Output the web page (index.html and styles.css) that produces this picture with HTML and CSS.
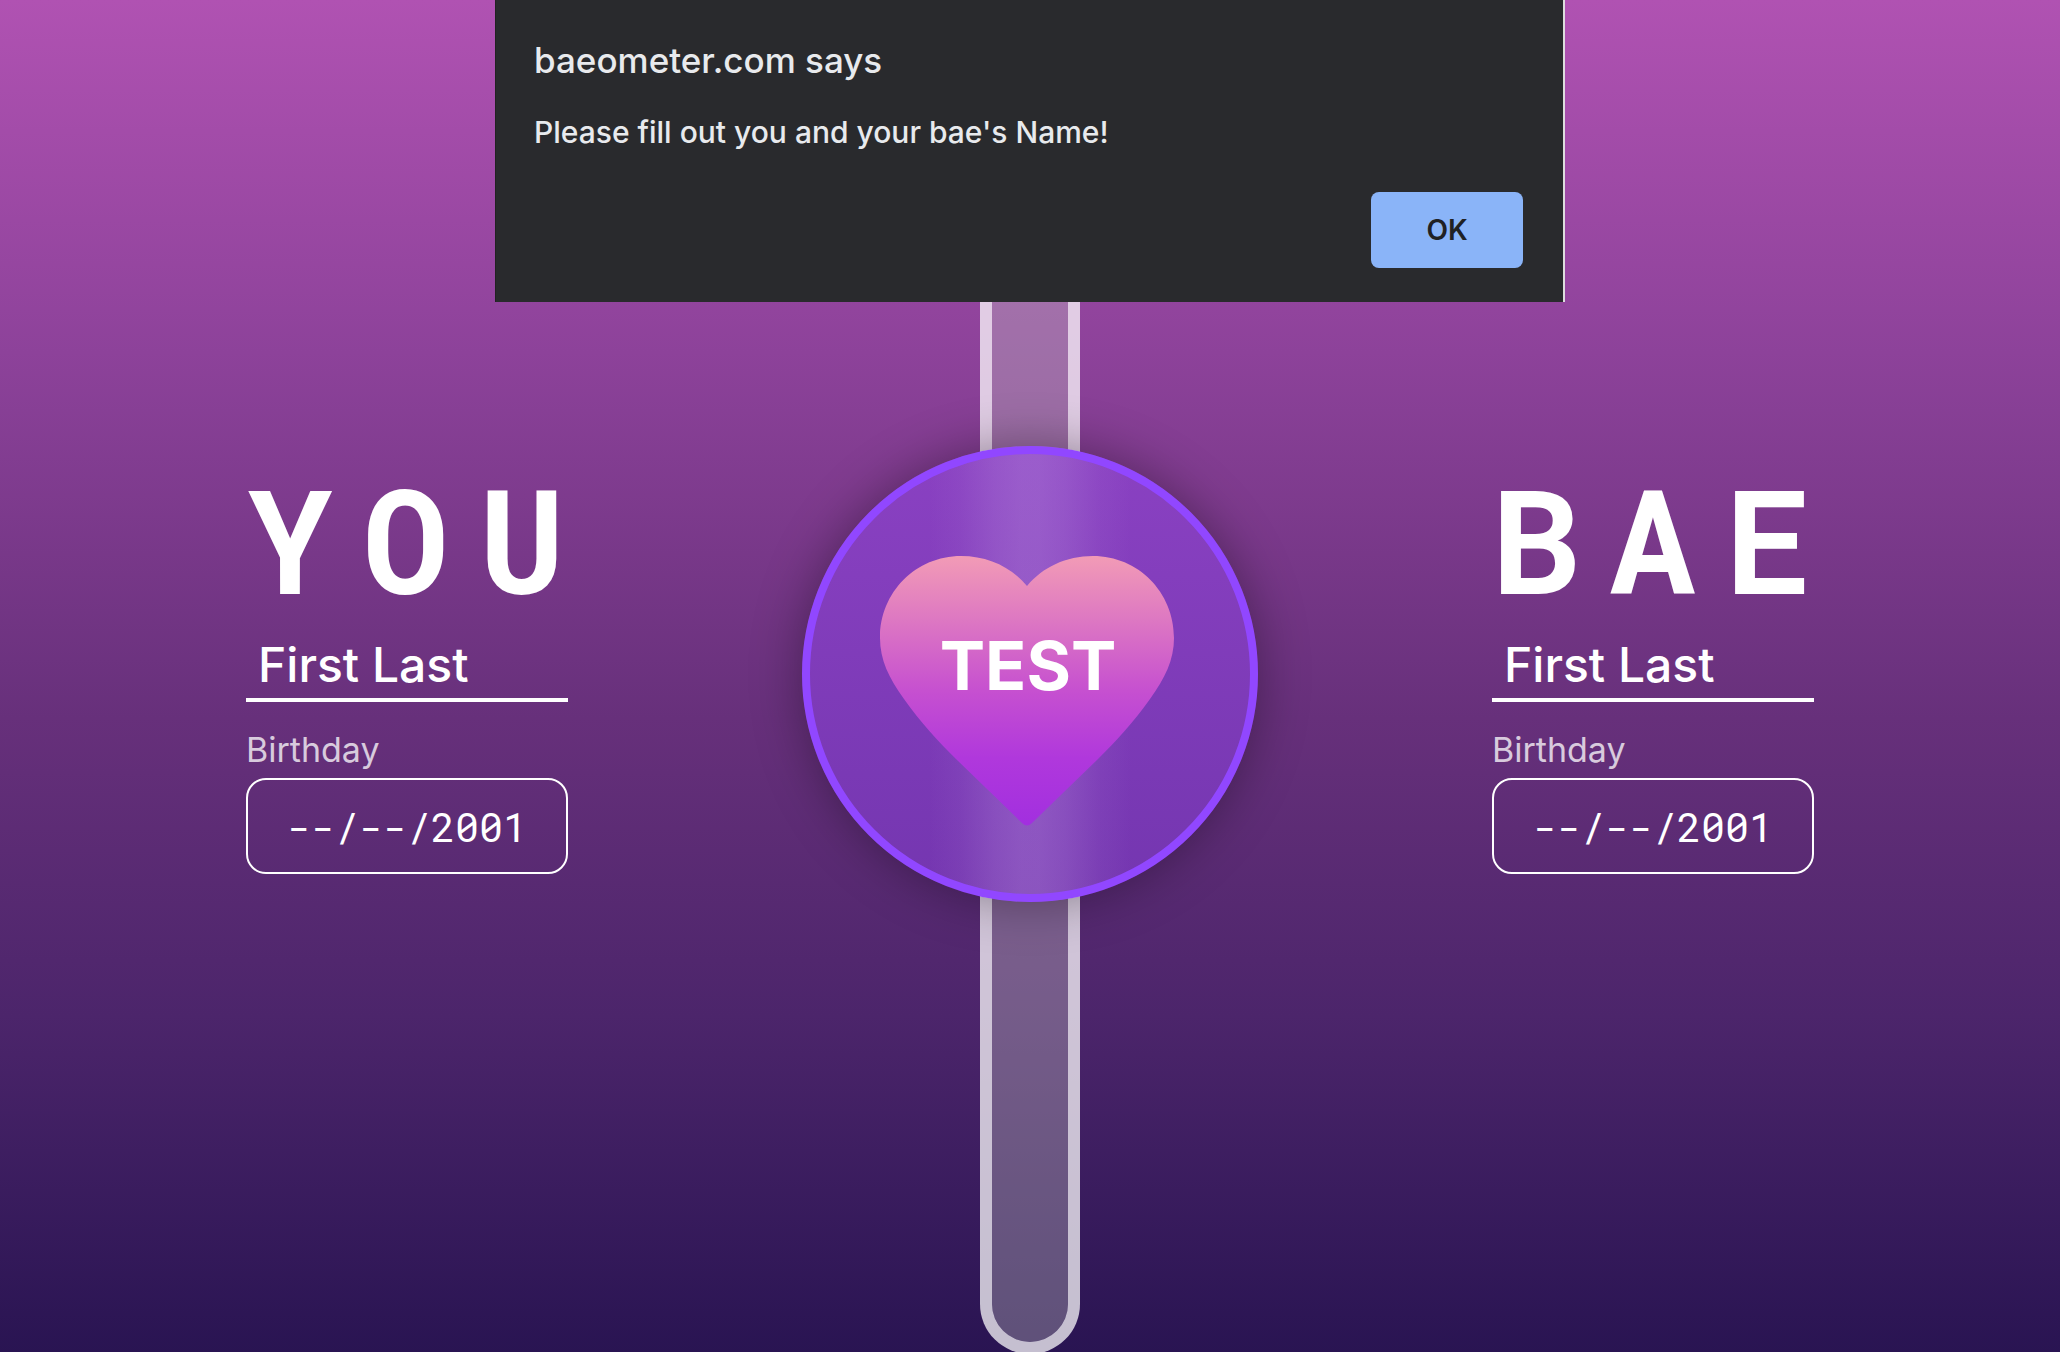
FILE: index.html
```html
<!DOCTYPE html>
<html lang="en">
<head>
<meta charset="utf-8">
<meta name="viewport" content="width=device-width, initial-scale=1">
<title>Baeometer</title>
<link rel="stylesheet" href="styles.css">
</head>
<body>
<main class="meter">
  <section class="person">
    <h1 class="person-title">YOU</h1>
    <input class="name-input" type="text" placeholder="First Last" aria-label="Your name">
    <label class="birthday-label" for="you-birthday">Birthday</label>
    <input class="birthday-input" id="you-birthday" type="text" value="--/--/2001">
  </section>

  <div class="gauge">
    <div class="track"></div>
    <button class="test-button" type="button">
      <svg class="heart" viewBox="0 0 300 270" aria-hidden="true">
        <defs>
          <linearGradient id="heart-fill" x1="0" y1="0" x2="0" y2="1">
            <stop offset="0" stop-color="#f29bb6"/>
            <stop offset="0.5" stop-color="#c650d0"/>
            <stop offset="0.75" stop-color="#b038dc"/>
            <stop offset="1" stop-color="#a22fdf"/>
          </linearGradient>
        </defs>
        <path fill="url(#heart-fill)" d="M147 30C131 11 108 0 81 0C36 0 0 36 0 82C0 104 9 122 24 143C41 167 58 185 76 203L142 267Q147 272 152 267L218 203C236 185 253 167 270 143C285 122 294 104 294 82C294 36 258 0 213 0C186 0 163 11 147 30Z"/>
      </svg>
      <span class="test-label">TEST</span>
    </button>
  </div>

  <section class="person">
    <h1 class="person-title">BAE</h1>
    <input class="name-input" type="text" placeholder="First Last" aria-label="Bae's name">
    <label class="birthday-label" for="bae-birthday">Birthday</label>
    <input class="birthday-input" id="bae-birthday" type="text" value="--/--/2001">
  </section>
</main>

<div class="dialog" role="alertdialog" aria-labelledby="dialog-title" aria-describedby="dialog-message">
  <h2 class="dialog-title" id="dialog-title">baeometer.com says</h2>
  <p class="dialog-message" id="dialog-message">Please fill out you and your bae's Name!</p>
  <button class="dialog-ok" type="button">OK</button>
</div>
</body>
</html>
```
FILE: styles.css
```css
* {
  box-sizing: border-box;
}

body {
  margin: 0;
  min-height: 100vh;
  overflow: hidden;
  font-family: Inter, "Liberation Sans", sans-serif;
  color: #fff;
  background: linear-gradient(#b052b2 0%, #8d429a 26%, #67307b 53%, #4c256b 75%, #291452 100%);
}

.meter {
  display: grid;
  grid-template-columns: 322px 456px 322px;
  justify-content: center;
  column-gap: 234px;
  min-height: 100vh;
}

.person {
  display: flex;
  flex-direction: column;
  padding-top: 454px;
}

.person-title {
  margin: 0;
  font-family: "Roboto Mono", "DejaVu Sans Mono", monospace;
  font-size: 144px;
  font-weight: 700;
  line-height: 168px;
  letter-spacing: 30px;
}

.name-input {
  width: 100%;
  height: 80px;
  padding: 8px 12px 0;
  font: 500 48px/60px Inter, sans-serif;
  color: #fff;
  background: none;
  border: 0;
  border-bottom: 4px solid #fff;
}

.name-input::placeholder {
  color: #fff;
  opacity: 1;
}

.birthday-label {
  margin: 28px 0 8px;
  font-size: 34px;
  line-height: 40px;
  color: rgba(255, 255, 255, 0.75);
}

.birthday-input {
  width: 100%;
  height: 96px;
  padding: 0 20px;
  font: 400 40px/48px "Roboto Mono", "DejaVu Sans Mono", monospace;
  text-align: center;
  color: #fff;
  background: none;
  border: 2px solid #fff;
  border-radius: 20px;
}

.gauge {
  display: grid;
  justify-items: center;
  height: 1354px;
}

.track,
.test-button {
  grid-area: 1 / 1;
}

.track {
  width: 100px;
  background: rgba(196, 196, 196, 0.35) padding-box;
  border: 12px solid rgba(255, 255, 255, 0.73);
  border-radius: 50px;
}

/* Frosted glass: a soft glow where the track passes behind the disc */
.test-button {
  display: grid;
  place-items: center;
  width: 456px;
  height: 456px;
  margin-top: 446px;
  padding: 0;
  font: inherit;
  color: #fff;
  background:
    linear-gradient(
      to right,
      rgba(196, 160, 228, 0) 27%,
      rgba(196, 160, 228, 0.07) 34%,
      rgba(196, 160, 228, 0.22) 42%,
      rgba(196, 160, 228, 0.29) 48%,
      rgba(196, 160, 228, 0.29) 52%,
      rgba(196, 160, 228, 0.22) 58%,
      rgba(196, 160, 228, 0.07) 66%,
      rgba(196, 160, 228, 0) 73%
    ),
    linear-gradient(#8a41c2, #7436b0);
  border: 8px solid #9147ff;
  border-radius: 50%;
  box-shadow: 0 0 50px rgba(0, 0, 0, 0.35);
}

.heart,
.test-label {
  grid-area: 1 / 1;
}

.heart {
  width: 300px;
  height: 270px;
  margin-top: 34px;
}

.test-label {
  padding: 0 4px 18px 0;
  font-size: 68px;
  font-weight: 700;
}

.dialog {
  position: absolute;
  top: 0;
  left: 50%;
  display: flex;
  flex-direction: column;
  width: 1070px;
  height: 302px;
  padding: 38px 40px 0 38px;
  transform: translateX(-50%);
  color: #e8eaed;
  background: #292a2d;
  border-right: 2px solid #ddd;
  border-left: 1px solid #222;
}

.dialog-title {
  margin: 0 0 28px;
  font-size: 35px;
  font-weight: 500;
  line-height: 44px;
}

.dialog-message {
  margin: 0;
  font-size: 30px;
  font-weight: 500;
  line-height: 44px;
}

.dialog-ok {
  flex: none;
  align-self: flex-end;
  width: 152px;
  height: 76px;
  margin-top: 38px;
  font: 600 28px/36px Inter, sans-serif;
  color: #202124;
  background: #8ab4f8;
  border: 0;
  border-radius: 8px;
}
```
